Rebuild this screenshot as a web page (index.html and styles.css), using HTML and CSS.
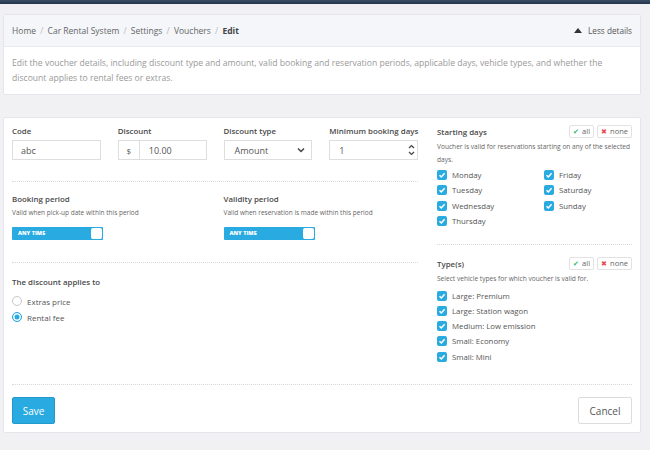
FILE: index.html
```html
<!DOCTYPE html>
<html lang="en">
<head>
    <meta charset="UTF-8">
    <meta name="viewport" content="width=device-width, initial-scale=1.0">
    <title>Edit voucher</title>
    <link rel="stylesheet" href="styles.css">
</head>
<body>

    <div class="topbar"></div>

    <div class="page">
        <!-- Breadcrumb + description -->
        <div class="card info-card">
            <div class="crumbs">
                <div class="crumb-path">Home <span class="sep">/</span> Car Rental System <span class="sep">/</span> Settings <span class="sep">/</span> Vouchers <span class="sep">/</span> <b>Edit</b></div>
                <div class="less"><span class="tri"></span>Less details</div>
            </div>
            <div class="desc">
                Edit the voucher details, including discount type and amount, valid booking and reservation periods, applicable days, vehicle types, and whether the discount applies to rental fees or extras.
            </div>
        </div>

        <!-- Form -->
        <div class="card form-card">
            <div class="form-body">
                <div class="form-main">
                    <div class="grid4">
                        <div class="field">
                            <label>Code</label>
                            <div class="input">abc</div>
                        </div>
                        <div class="field">
                            <label>Discount</label>
                            <div class="input group">
                                <span class="addon">$</span>
                                <span class="val">10.00</span>
                            </div>
                        </div>
                        <div class="field">
                            <label>Discount type</label>
                            <div class="input select">
                                <span>Amount</span>
                                <svg width="8" height="6" viewBox="0 0 8 6"><path d="M1 1.5 L4 4.5 L7 1.5" fill="none" stroke="#444" stroke-width="1.5"/></svg>
                            </div>
                        </div>
                        <div class="field">
                            <label>Minimum booking days</label>
                            <div class="input number">
                                <span>1</span>
                                <svg width="7" height="14" viewBox="0 0 7 14"><path d="M1 5 L3.5 2.5 L6 5 M1 9 L3.5 11.5 L6 9" fill="none" stroke="#444" stroke-width="1.2"/></svg>
                            </div>
                        </div>
                    </div>

                    <div class="divider"></div>

                    <div class="grid4 periods">
                        <div class="period">
                            <label>Booking period</label>
                            <p class="hint">Valid when pick-up date within this period</p>
                            <div class="toggle">ANY TIME<span class="knob"></span></div>
                        </div>
                        <div class="period">
                            <label>Validity period</label>
                            <p class="hint">Valid when reservation is made within this period</p>
                            <div class="toggle">ANY TIME<span class="knob"></span></div>
                        </div>
                    </div>

                    <div class="divider"></div>

                    <label class="applies">The discount applies to</label>
                    <div class="radio"><span class="dot"></span>Extras price</div>
                    <div class="radio"><span class="dot on"></span>Rental fee</div>
                </div>

                <div class="form-side">
                    <div class="side-head">
                        <label>Starting days</label>
                        <div class="pick">
                            <span class="mini"><i class="ok">&#10004;</i>all</span>
                            <span class="mini"><i class="no">&#10006;</i>none</span>
                        </div>
                    </div>
                    <p class="side-hint">Voucher is valid for reservations starting on any of the selected days.</p>
                    <div class="days">
                        <div class="check"><span class="box"></span>Monday</div>
                        <div class="check"><span class="box"></span>Friday</div>
                        <div class="check"><span class="box"></span>Tuesday</div>
                        <div class="check"><span class="box"></span>Saturday</div>
                        <div class="check"><span class="box"></span>Wednesday</div>
                        <div class="check"><span class="box"></span>Sunday</div>
                        <div class="check"><span class="box"></span>Thursday</div>
                    </div>

                    <div class="divider side-div"></div>

                    <div class="side-head">
                        <label>Type(s)</label>
                        <div class="pick">
                            <span class="mini"><i class="ok">&#10004;</i>all</span>
                            <span class="mini"><i class="no">&#10006;</i>none</span>
                        </div>
                    </div>
                    <p class="side-hint one">Select vehicle types for which voucher is valid for.</p>
                    <div class="types">
                        <div class="check"><span class="box"></span>Large: Premium</div>
                        <div class="check"><span class="box"></span>Large: Station wagon</div>
                        <div class="check"><span class="box"></span>Medium: Low emission</div>
                        <div class="check"><span class="box"></span>Small: Economy</div>
                        <div class="check"><span class="box"></span>Small: Mini</div>
                    </div>
                </div>
            </div>

            <div class="form-footer">
                <button class="btn save">Save</button>
                <button class="btn cancel">Cancel</button>
            </div>
        </div>
    </div>

</body>
</html>
```

FILE: styles.css
```css
body {
    margin: 0;
    background-color: #f1f1f3;
    font-family: 'Open Sans', 'Noto Sans', sans-serif;
    color: #555;
    height: 450px;
    overflow: hidden;
}

.topbar {
    height: 4px;
    background: linear-gradient(#3a4e66, #22344a);
}

.page {
    padding: 10px 9px 0 3px;
}

.card {
    background-color: #ffffff;
    border: 1px solid #e4e6ea;
    border-radius: 2px;
}

/* breadcrumb card */
.info-card {
    margin-bottom: 22px;
}

.crumbs {
    height: 31px;
    display: flex;
    align-items: center;
    justify-content: space-between;
    padding: 0 8px 0 8px;
    background-color: #f4f6f9;
    border-bottom: 1px solid #e8eaee;
    font-size: 8.5px;
    color: #666;
}

.crumb-path b {
    color: #444;
    font-weight: 700;
}

.crumb-path .sep {
    color: #bbb;
    margin: 0 2px;
}

.less {
    display: flex;
    align-items: center;
    font-size: 8.2px;
    color: #555;
}

.tri {
    width: 0;
    height: 0;
    border-left: 4px solid transparent;
    border-right: 4px solid transparent;
    border-bottom: 5px solid #333;
    margin-right: 6px;
}

.desc {
    padding: 9px 8px 8px 8px;
    font-size: 8.6px;
    line-height: 15px;
    color: #999;
}

/* form card */
.form-card {
    height: 316px;
    padding: 0 8px;
    box-sizing: border-box;
    display: flex;
    flex-direction: column;
}

.form-body {
    display: flex;
    gap: 19px;
    padding-top: 7px;
    height: 260px;
}

.form-main {
    width: 406px;
}

.form-side {
    flex: 1;
}

label {
    display: block;
    font-size: 7.9px;
    line-height: 12px;
    font-weight: 600;
    color: #4a4a4a;
    white-space: nowrap;
}

.grid4 {
    display: grid;
    grid-template-columns: repeat(4, minmax(0, 1fr));
    column-gap: 17px;
}

.field label {
    margin-bottom: 3px;
}

.input {
    height: 20px;
    box-sizing: border-box;
    border: 1px solid #dedede;
    display: flex;
    align-items: center;
    padding: 0 8px;
    font-size: 9px;
    color: #555;
}

.input.group {
    padding: 0;
}

.addon {
    width: 20px;
    height: 100%;
    display: flex;
    align-items: center;
    justify-content: center;
    border-right: 1px solid #dedede;
    font-size: 8px;
}

.input.group .val {
    padding-left: 9px;
}

.input.select {
    justify-content: space-between;
    padding: 0 6px 0 10px;
}

.input.number {
    justify-content: space-between;
    padding: 0 2px 0 9px;
}

.divider {
    border-top: 1px dotted #d8d8d8;
    margin: 21px 0 11px 0;
}

.period {
    grid-column: span 2;
}

.hint {
    margin: 2px 0 9px 0;
    font-size: 6.5px;
    line-height: 11px;
    color: #666;
}

.toggle {
    width: 91px;
    height: 13px;
    box-sizing: border-box;
    background-color: #29abe2;
    border-radius: 1px;
    color: #fff;
    font-size: 5.5px;
    font-weight: 800;
    line-height: 13px;
    padding-left: 6px;
    position: relative;
}

.knob {
    position: absolute;
    right: 1px;
    top: 1px;
    width: 11px;
    height: 11px;
    background-color: #fff;
    border-radius: 2px;
}

.periods + .divider {
    margin-top: 22px;
    margin-bottom: 13px;
}

.applies {
    margin-bottom: 5px;
}

.radio {
    height: 16px;
    display: flex;
    align-items: center;
    font-size: 8px;
    color: #555;
}

.dot {
    width: 8px;
    height: 8px;
    border: 1px solid #c8c8c8;
    border-radius: 50%;
    margin-right: 5px;
    box-sizing: content-box;
}

.dot.on {
    border-color: #29abe2;
    background-color: #29abe2;
    box-shadow: inset 0 0 0 1.5px #fff;
}

/* side column */
.side-head {
    display: flex;
    justify-content: space-between;
    align-items: center;
    height: 13px;
}

.pick {
    display: flex;
    gap: 3px;
}

.mini {
    height: 13px;
    box-sizing: border-box;
    border: 1px solid #e2e2e2;
    border-radius: 2px;
    font-size: 7.5px;
    line-height: 11px;
    padding: 0 3px;
    color: #666;
}

.mini i {
    font-style: normal;
    margin-right: 3px;
    font-size: 7px;
}

.mini .ok {
    color: #2fb872;
}

.mini .no {
    color: #e8484d;
}

.side-hint {
    margin: 2px 0 1px 0;
    font-size: 6.6px;
    line-height: 13px;
    color: #666;
}

.side-hint.one {
    margin-bottom: 3px;
}

.days {
    display: grid;
    grid-template-columns: 107px 1fr;
}

.check {
    height: 15.5px;
    display: flex;
    align-items: center;
    font-size: 7.8px;
    color: #555;
}

.types .check {
    height: 15.25px;
}

.box {
    width: 10px;
    height: 10px;
    border-radius: 2px;
    background-color: #29abe2;
    margin-right: 5px;
    background-image: url("data:image/svg+xml;utf8,<svg xmlns='http://www.w3.org/2000/svg' viewBox='0 0 10 10'><path d='M2.5 5.2 L4.3 7 L7.6 3.3' fill='none' stroke='white' stroke-width='1.5'/></svg>");
}

.side-div {
    margin: 15px 0 12px 0;
}

/* footer */
.form-footer {
    margin-top: auto;
    border-top: 1px dotted #d8d8d8;
    padding: 12px 0 8px 0;
    display: flex;
    justify-content: space-between;
}

.btn {
    height: 27px;
    font-family: 'Open Sans', 'Noto Sans', sans-serif;
    font-size: 10px;
    border-radius: 2px;
    cursor: pointer;
}

.save {
    width: 43px;
    background-color: #29abe2;
    border: 1px solid #2399cc;
    color: #fff;
}

.cancel {
    width: 54px;
    background-color: #fff;
    border: 1px solid #dcdcdc;
    color: #555;
}
```
